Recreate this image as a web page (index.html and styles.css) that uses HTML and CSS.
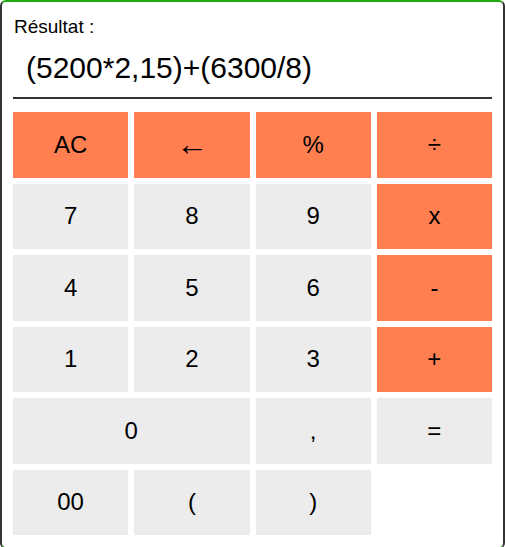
FILE: index.html
```html
<!DOCTYPE html>
<html lang="fr">
<head>
<meta charset="utf-8">
<title>Calculatrice</title>
<link rel="stylesheet" href="styles.css">
</head>
<body>
<div class="calc">
  <div class="screen">
    <div class="label">Résultat :</div>
    <div class="display">(5200*2,15)+(6300/8)</div>
  </div>
  <div class="keys">
    <button class="key op">AC</button>
    <button class="key op arrow">&larr;</button>
    <button class="key op">%</button>
    <button class="key op">&divide;</button>
    <button class="key">7</button>
    <button class="key">8</button>
    <button class="key">9</button>
    <button class="key op">x</button>
    <button class="key">4</button>
    <button class="key">5</button>
    <button class="key">6</button>
    <button class="key op">-</button>
    <button class="key">1</button>
    <button class="key">2</button>
    <button class="key">3</button>
    <button class="key op">+</button>
    <button class="key wide">0</button>
    <button class="key">,</button>
    <button class="key">=</button>
    <button class="key">00</button>
    <button class="key">(</button>
    <button class="key">)</button>
  </div>
</div>
</body>
</html>
```
FILE: styles.css
```css
html, body {
  margin: 0;
  padding: 0;
  background: #fff;
}
body {
  font-family: "Liberation Sans", Arial, sans-serif;
  color: #000;
}
.calc {
  box-sizing: border-box;
  width: 505px;
  height: 549px;
  border: 2px solid #333;
  border-top-color: #22aa11;
  border-bottom-color: #22aa11;
  border-radius: 6px;
  padding: 14px 11px 11px;
  background: #fff;
}
.screen {
  border-bottom: 2px solid #333;
  margin-bottom: 13px;
}
.label {
  font-size: 19px;
  line-height: 22px;
  padding-left: 1px;
}
.display {
  font-size: 30px;
  line-height: 36px;
  padding: 12px 0 11px 13px;
}
.keys {
  display: grid;
  grid-template-columns: repeat(4, 1fr);
  grid-auto-rows: 65.5px;
  gap: 6px;
}
.key {
  border: none;
  margin: 0;
  background: #ececec;
  font-family: "Liberation Sans", Arial, sans-serif;
  font-size: 24px;
  color: #000;
  padding: 0;
}
.key.op {
  background: #ff7f50;
}
.key.arrow {
  font-family: "Liberation Serif", "DejaVu Serif", serif;
  font-size: 32px;
}
.key.wide {
  grid-column: span 2;
}
```
